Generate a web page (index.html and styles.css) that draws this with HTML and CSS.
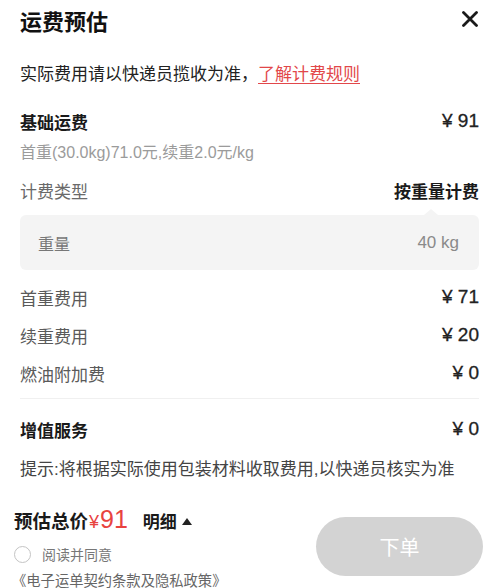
FILE: index.html
```html
<!DOCTYPE html>
<html lang="zh-CN">
<head>
<meta charset="utf-8">
<title>运费预估</title>
<link rel="stylesheet" href="styles.css">
</head>
<body>
<div class="sheet">
  <div class="header">
    <h1 class="title">运费预估</h1>
    <svg class="close" width="16" height="16" viewBox="0 0 16 16"><path d="M1.5 1.5 L14.5 14.5 M14.5 1.5 L1.5 14.5" stroke="#1a1a1a" stroke-width="2.8" stroke-linecap="round" fill="none"/></svg>
  </div>
  <div class="notice">实际费用请以快递员揽收为准，<a class="rule-link">了解计费规则</a></div>

  <div class="row section row-base"><span>基础运费</span><span class="val">¥ 91</span></div>
  <div class="sub">首重(30.0kg)71.0元,续重2.0元/kg</div>
  <div class="row row-type"><span class="label">计费类型</span><span class="strong">按重量计费</span></div>
  <div class="box">
    <span class="box-label">重量</span><span class="box-val">40 kg</span>
  </div>
  <div class="row row-fee first"><span class="label">首重费用</span><span class="val">¥ 71</span></div>
  <div class="row row-fee"><span class="label">续重费用</span><span class="val">¥ 20</span></div>
  <div class="row row-fee"><span class="label">燃油附加费</span><span class="val">¥ 0</span></div>
  <div class="divider"></div>
  <div class="row section row-extra"><span>增值服务</span><span class="val">¥ 0</span></div>
  <div class="hint">提示:将根据实际使用包装材料收取费用,以快递员核实为准</div>

  <div class="footer">
    <div class="footer-left">
      <div class="total"><span>预估总价</span><span class="price"><span class="yen">¥</span>91</span><span class="detail">明细</span><span class="caret"></span></div>
      <div class="agree"><span class="radio"></span><span>阅读并同意</span></div>
      <div class="terms">《电子运单契约条款及隐私政策》</div>
    </div>
    <button class="submit">下单</button>
  </div>
</div>
</body>
</html>
```

FILE: styles.css
```css
* { box-sizing: border-box; }
html, body { margin: 0; padding: 0; background: #fff; }
body {
  font-family: "Liberation Sans", "Noto Sans CJK SC", sans-serif;
  color: #222;
  width: 485px;
  height: 588px;
  overflow: hidden;
}
.sheet { padding: 8px 6px 0 20px; }

.header {
  display: flex;
  align-items: flex-start;
  justify-content: space-between;
  height: 30px;
}
.title {
  margin: 0;
  font-size: 22px;
  line-height: 30px;
  font-weight: 700;
  color: #111;
}
.close { margin-top: 3px; margin-right: 1px; }

.notice {
  margin-top: 25px;
  font-size: 17px;
  line-height: 24px;
  color: #222;
}
.rule-link {
  color: #e2474a;
  text-decoration: underline;
  text-underline-offset: 3px;
}

.row {
  display: flex;
  align-items: center;
  justify-content: space-between;
  height: 24px;
  font-size: 17px;
}
.section { font-weight: 700; color: #1a1a1a; }
.val {
  font-size: 19px;
  font-weight: 400;
  color: #222;
  -webkit-text-stroke: 0.3px #222;
}
.row-base { margin-top: 22px; }
.row-extra { margin-top: 18px; }
.label { color: #5a5a5a; }
.strong { font-weight: 700; color: #1a1a1a; }

.sub {
  margin-top: 9px;
  height: 22px;
  line-height: 22px;
  font-size: 16px;
  color: #9b9b9b;
}
.row-type { margin-top: 14px; }
.row-type .label { color: #6a6a6a; }

.box {
  position: relative;
  margin-top: 13px;
  height: 55px;
  background: #f4f4f4;
  border-radius: 6px;
  display: flex;
  align-items: center;
  justify-content: space-between;
  padding: 0 20px 0 18px;
  font-size: 16px;
  color: #8a8a8a;
}
.box::before {
  content: "";
  position: absolute;
  top: -6px;
  right: 41px;
  border-left: 7px solid transparent;
  border-right: 7px solid transparent;
  border-bottom: 6px solid #f4f4f4;
}
.box-label { color: #777; }
.box-val { color: #8a8a8a; font-size: 17px; }

.row-fee { margin-top: 14px; }
.row-fee.first { margin-top: 15px; }

.divider {
  margin-top: 13px;
  height: 1px;
  background: #f0f0f0;
}

.hint {
  margin-top: 17px;
  font-size: 17px;
  line-height: 24px;
  color: #444;
}

.footer {
  display: flex;
  justify-content: space-between;
  margin-left: -6px;
  margin-top: 22px;
}
.footer-left { display: flex; flex-direction: column; }
.total {
  display: flex;
  align-items: baseline;
  height: 30px;
  line-height: 30px;
  font-size: 18.5px;
  font-weight: 700;
  color: #1a1a1a;
}
.price {
  color: #e8433f;
  font-weight: 400;
  font-size: 25px;
  margin-left: 1px;
}
.yen { font-size: 18px; margin-right: 1px; }
.detail { margin-left: 15px; font-size: 17px; }
.caret {
  display: inline-block;
  margin-left: 5px;
  width: 0;
  height: 0;
  border-left: 5px solid transparent;
  border-right: 5px solid transparent;
  border-bottom: 7px solid #222;
  position: relative;
  top: -3px;
}
.agree {
  display: flex;
  align-items: center;
  margin-top: 10px;
  height: 20px;
  font-size: 14px;
  color: #777;
}
.radio {
  width: 17px;
  height: 17px;
  border: 1.5px solid #c4c4c4;
  border-radius: 50%;
  margin-right: 11px;
}
.terms {
  margin-top: 7px;
  height: 20px;
  line-height: 20px;
  font-size: 14.3px;
  color: #666;
  margin-left: -2px;
}
.submit {
  margin-top: 13px;
  width: 167px;
  height: 59px;
  border: none;
  border-radius: 30px;
  background: #d3d3d3;
  color: #fff;
  font-family: "Liberation Sans", "Noto Sans CJK SC", sans-serif;
  font-size: 20px;
  margin-right: -4px;
}
```
